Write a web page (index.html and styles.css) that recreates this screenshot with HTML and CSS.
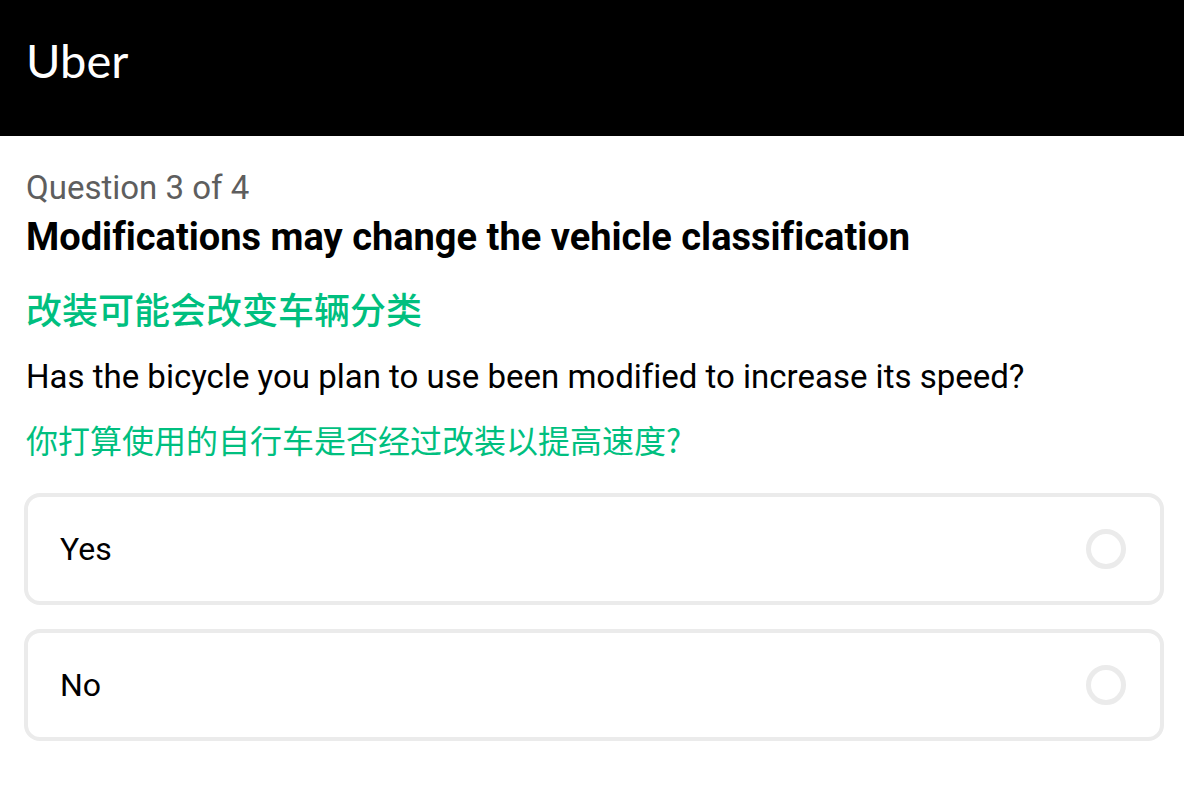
FILE: index.html
```html
<!DOCTYPE html>
<html lang="en">
<head>
<meta charset="utf-8">
<meta name="viewport" content="width=device-width, initial-scale=1">
<title>Uber</title>
<link rel="stylesheet" href="styles.css">
</head>
<body>
<header class="header">
  <div class="logo">Uber</div>
</header>
<main class="main">
  <section class="intro">
    <p class="step">Question 3 of 4</p>
    <h1 class="title">Modifications may change the vehicle classification</h1>
    <p class="title-translation" lang="zh-CN">改装可能会改变车辆分类</p>
    <p class="question" id="question">Has the bicycle you plan to use been modified to increase its speed?</p>
    <p class="question-translation" lang="zh-CN">你打算使用的自行车是否经过改装以提高速度?</p>
  </section>
  <form class="options" role="radiogroup" aria-labelledby="question">
    <label class="option" for="answer-yes">
      <span>Yes</span>
      <input class="radio" type="radio" name="answer" id="answer-yes" value="yes">
    </label>
    <label class="option" for="answer-no">
      <span>No</span>
      <input class="radio" type="radio" name="answer" id="answer-no" value="no">
    </label>
  </form>
</main>
</body>
</html>
```
FILE: styles.css
```css
* {
  box-sizing: border-box;
}

body {
  margin: 0;
  background: #fff;
  color: #000;
  font-family: Roboto, "Noto Sans CJK SC", sans-serif;
  font-size: 32px;
  font-variant-ligatures: none;
  line-height: 48px;
}

p,
h1 {
  margin: 0;
}

.header {
  padding: 32px 26px 48px;
  background: #000;
  color: #fff;
}

.logo {
  font-family: Lato, sans-serif;
  font-size: 47px;
  line-height: 56px;
}

.main {
  padding: 28px 20px 48px 24px;
}

.intro {
  padding: 0 2px;
}

.step {
  color: #5e5e5e;
  font-size: 33px;
}

.title {
  font-size: 38px;
  font-weight: 700;
  line-height: 50px;
}

.title-translation {
  margin-top: 22px;
  color: #00bf7f;
  font-family: "Noto Sans CJK SC", sans-serif;
  font-size: 36px;
  font-weight: 500;
}

.question {
  margin-top: 21px;
  font-size: 33px;
}

.question-translation {
  margin-top: 14px;
  color: #00bf7f;
  font-family: "Noto Sans CJK SC", sans-serif;
}

.options {
  display: flex;
  flex-direction: column;
  gap: 24px;
  margin-top: 30px;
}

.option {
  display: flex;
  align-items: center;
  justify-content: space-between;
  padding: 28px 34px 28px 32px;
  border: 4px solid #ebebeb;
  border-radius: 16px;
  cursor: pointer;
}

.radio {
  appearance: none;
  width: 40px;
  height: 40px;
  margin: 0;
  border: 5px solid #ebebeb;
  border-radius: 50%;
  background: #fff;
}

.radio:checked {
  border: 12px solid #000;
}
```
